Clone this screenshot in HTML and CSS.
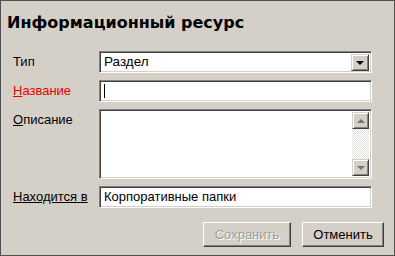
FILE: index.html
```html
<!DOCTYPE html>
<html>
<head>
  <meta charset="utf-8" />
  <title>Информационный ресурс</title>
  <link rel="stylesheet" href="styles.css">
</head>
<body>
  <div class="dialog">
    <h1 class="title">Информационный ресурс</h1>
    <div class="form">
      <label class="label">Тип</label>
      <div class="field select">
        <span class="value">Раздел</span>
        <span class="drop-btn"><span class="arrow-down"></span></span>
      </div>

      <label class="label required"><u>Н</u>азвание</label>
      <div class="field input"><span class="caret"></span></div>

      <label class="label"><u>О</u>писание</label>
      <div class="field textarea">
        <div class="scrollbar">
          <span class="sb-btn"><span class="arrow-up small"></span></span>
          <span class="sb-track"></span>
          <span class="sb-btn"><span class="arrow-down small"></span></span>
        </div>
      </div>

      <label class="label link">Находится в</label>
      <div class="field input"><span class="value">Корпоративные папки</span></div>
    </div>
    <div class="buttons">
      <button class="btn" disabled>Сохранить</button>
      <button class="btn">Отменить</button>
    </div>
  </div>
</body>
</html>
```

FILE: styles.css
```css
:root {
  --face: #d4d0c8;
  --shadow: #808080;
  --dark: #404040;
  --light: #ffffff;
}
body {
  margin: 0;
  font-family: "Liberation Sans", Arial, sans-serif;
  font-size: 13px;
  color: #000;
  background: var(--face);
}
.dialog {
  box-sizing: border-box;
  width: 395px;
  height: 256px;
  border: 1px solid #505050;
  background: var(--face);
  padding: 0 10px 0 12px;
}
.title {
  box-sizing: border-box;
  height: 50px;
  margin: 0 0 0 -6px;
  padding-top: 12px;
  font-family: "DejaVu Sans", Verdana, sans-serif;
  font-size: 16px;
  font-weight: bold;
  line-height: 19px;
  color: #000;
}
.form {
  display: grid;
  grid-template-columns: 86px 273px;
  row-gap: 7px;
  align-items: start;
}
.label {
  line-height: 22px;
  white-space: nowrap;
}
.required { color: #e60000; }
.link { text-decoration: underline; }

/* sunken field */
.field {
  box-sizing: border-box;
  height: 22px;
  background: #fff;
  border-top: 1px solid var(--shadow);
  border-left: 1px solid var(--shadow);
  border-right: 1px solid var(--light);
  border-bottom: 1px solid var(--light);
  box-shadow: inset 1px 1px 0 var(--dark), inset -1px -1px 0 var(--face);
  display: flex;
  align-items: center;
  padding: 0 2px 0 4px;
}
.value { flex: 1; line-height: 18px; }
.select .value { font-size: 13.5px; }
.caret {
  width: 1px;
  height: 14px;
  background: #000;
}
.drop-btn, .sb-btn {
  box-sizing: border-box;
  width: 17px;
  height: 17px;
  background: var(--face);
  border-top: 1px solid var(--face);
  border-left: 1px solid var(--face);
  border-right: 1px solid var(--dark);
  border-bottom: 1px solid var(--dark);
  box-shadow: inset 1px 1px 0 var(--light), inset -1px -1px 0 var(--shadow);
  display: flex;
  align-items: center;
  justify-content: center;
}
.drop-btn { width: 18px; }
.arrow-down {
  width: 0;
  height: 0;
  border-left: 4px solid transparent;
  border-right: 4px solid transparent;
  border-top: 4px solid #000;
  margin-top: 1px;
}
.arrow-up {
  width: 0;
  height: 0;
  border-left: 4px solid transparent;
  border-right: 4px solid transparent;
  border-bottom: 4px solid #000;
}
.small { opacity: 0.45; }
.textarea {
  height: 70px;
  align-items: stretch;
  justify-content: flex-end;
  padding: 2px 2px 2px 4px;
}
.scrollbar {
  width: 17px;
  display: flex;
  flex-direction: column;
}
.sb-track {
  flex: 1;
  background: repeating-conic-gradient(#e4e2de 0 25%, #fff 0 50%) 0 0 / 2px 2px;
}
.buttons {
  display: flex;
  justify-content: flex-end;
  gap: 11px;
  margin-top: 14px;
}
.btn {
  box-sizing: border-box;
  width: 82px;
  height: 25px;
  padding: 0;
  font-family: "Liberation Sans", Arial, sans-serif;
  font-size: 13px;
  color: #000;
  background: var(--face);
  border-top: 1px solid var(--light);
  border-left: 1px solid var(--light);
  border-right: 1px solid var(--dark);
  border-bottom: 1px solid var(--dark);
  box-shadow: inset -1px -1px 0 var(--shadow);
}
.btn:disabled {
  width: 88px;
  color: #a09d97;
  text-shadow: 1px 1px 0 #fff;
}
```
